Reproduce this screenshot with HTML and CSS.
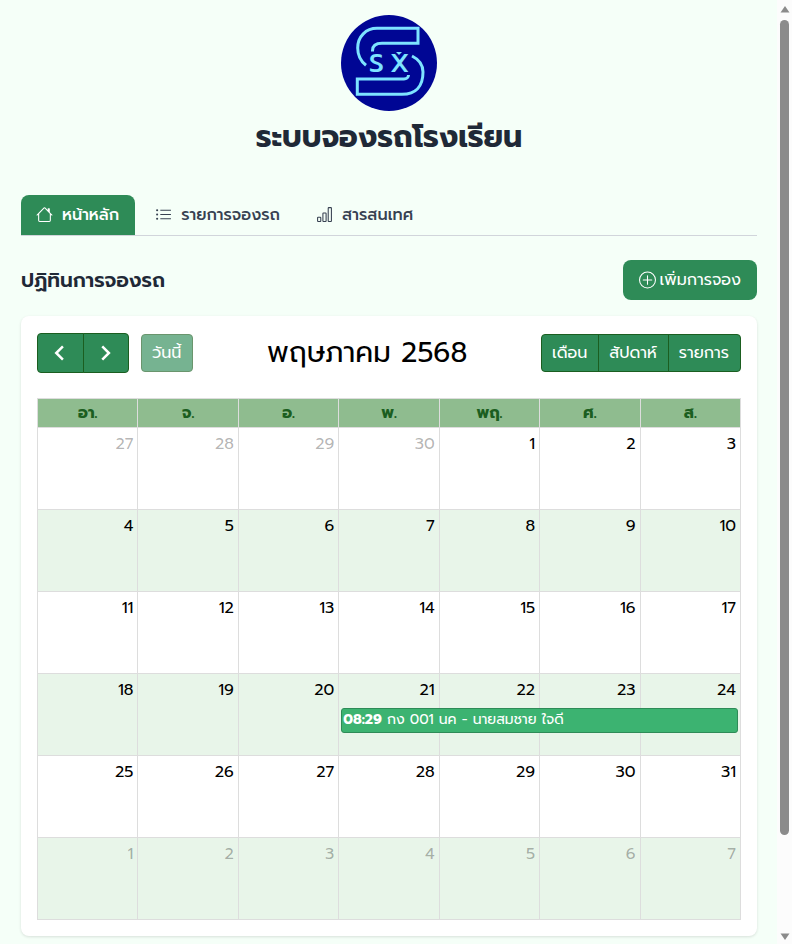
FILE: index.html
```html
<!DOCTYPE html>
<html lang="th">
<head>
<meta charset="utf-8">
<meta name="viewport" content="width=device-width, initial-scale=1">
<title>ระบบจองรถโรงเรียน</title>
<link rel="stylesheet" href="styles.css">
</head>
<body>
<div class="page">
  <header class="masthead">
    <svg class="logo" viewBox="0 0 96 96" role="img" aria-label="SX">
      <circle cx="48" cy="48" r="48" fill="#000694"/>
      <g fill="none" stroke="#7de3ff" stroke-width="3">
        <path d="M25 50.3C19.500 46 16.700 39.500 16.700 33C16.700 21.500 25 13.300 36 13.300H77V28.300H41C35 28.300 31.500 31 31.500 35.700V36.500"/>
        <path d="M71 41C78 44.500 82 50 82 57C82 71 75 79.300 61 79.300H16.300V64H63C65.500 64 67.500 62.500 67.500 60"/>
      </g>
      <path d="M55 37h6l-3 3z" fill="#7de3ff"/>
      <text class="logo-text" x="28" y="57">S</text>
      <text class="logo-text" x="49" y="57">X</text>
    </svg>
    <h1>ระบบจองรถโรงเรียน</h1>
  </header>

  <nav class="tabs">
    <a class="tab active" href="#home">
      <svg class="icon" viewBox="0 0 16 16" fill="currentColor"><path d="M8.707 1.500a1 1 0 0 0-1.414 0L.646 8.146a.5.5 0 0 0 .708.708L2 8.207V13.500A1.500 1.500 0 0 0 3.500 15h9a1.500 1.500 0 0 0 1.500-1.500V8.207l.646.647a.5.5 0 0 0 .708-.708L13 5.793V2.500a.5.5 0 0 0-.5-.5h-1a.5.5 0 0 0-.5.5v1.293zM13 7.207V13.500a.5.5 0 0 1-.5.5h-9a.5.5 0 0 1-.5-.5V7.207l5-5z"/></svg>
      <span>หน้าหลัก</span>
    </a>
    <a class="tab" href="#bookings">
      <svg class="icon" viewBox="0 0 16 16" fill="currentColor"><path d="M5 11.500h10v1H5zM5 7.500h10v1H5zM5 3.500h10v1H5z"/><circle cx="2" cy="4" r="1"/><circle cx="2" cy="8" r="1"/><circle cx="2" cy="12" r="1"/></svg>
      <span>รายการจองรถ</span>
    </a>
    <a class="tab" href="#info">
      <svg class="icon" viewBox="0 0 16 16" fill="none" stroke="currentColor"><rect x="1.500" y="10.500" width="3" height="4" rx=".5"/><rect x="6.500" y="6.500" width="3" height="8" rx=".5"/><rect x="11.500" y="1.500" width="3" height="13" rx=".5"/></svg>
      <span>สารสนเทศ</span>
    </a>
  </nav>

  <main>
    <div class="section-head">
      <h2>ปฏิทินการจองรถ</h2>
      <button class="add" type="button">
        <svg class="icon" viewBox="0 0 16 16" fill="none" stroke="currentColor"><circle cx="8" cy="7.500" r="7.500"/><path d="M8 3.500v8M4 7.500h8" stroke-linecap="round"/></svg>
        <span>เพิ่มการจอง</span>
      </button>
    </div>

    <section class="card">
      <div class="toolbar">
        <div class="tools">
          <div class="group arrows">
            <button type="button" aria-label="ก่อนหน้า"><svg viewBox="0 0 24 24"><path d="M15.500 4l-8 8 8 8"/></svg></button>
            <button type="button" aria-label="ถัดไป"><svg viewBox="0 0 24 24"><path d="M7.500 4l8 8-8 8"/></svg></button>
          </div>
          <button class="today" type="button" disabled>วันนี้</button>
        </div>
        <h2 class="month">พฤษภาคม 2568</h2>
        <div class="group views">
          <button type="button">เดือน</button>
          <button type="button">สัปดาห์</button>
          <button type="button">รายการ</button>
        </div>
      </div>
      <table class="calendar">
        <thead>
          <tr><th>อา.</th><th>จ.</th><th>อ.</th><th>พ.</th><th>พฤ.</th><th>ศ.</th><th>ส.</th></tr>
        </thead>
        <tbody>
          <tr><td class="other">27</td><td class="other">28</td><td class="other">29</td><td class="other">30</td><td>1</td><td>2</td><td>3</td></tr>
          <tr><td>4</td><td>5</td><td>6</td><td>7</td><td>8</td><td>9</td><td>10</td></tr>
          <tr><td>11</td><td>12</td><td>13</td><td>14</td><td>15</td><td>16</td><td>17</td></tr>
          <tr><td>18</td><td>19</td><td>20</td><td class="has-event">21<a class="event" href="#event"><b>08:29</b> กง 001 นค - นายสมชาย ใจดี</a></td><td>22</td><td>23</td><td>24</td></tr>
          <tr><td>25</td><td>26</td><td>27</td><td>28</td><td>29</td><td>30</td><td>31</td></tr>
          <tr><td class="other">1</td><td class="other">2</td><td class="other">3</td><td class="other">4</td><td class="other">5</td><td class="other">6</td><td class="other">7</td></tr>
        </tbody>
      </table>
    </section>
  </main>
</div>
<div class="scrollbar" aria-hidden="true">
  <svg class="cap" viewBox="0 0 10 8"><path d="M5 1L9.500 7.500H.5z"/></svg>
  <div class="track"><div class="thumb"></div></div>
  <svg class="cap" viewBox="0 0 10 8"><path d="M5 7L9.500 .5H.5z"/></svg>
</div>
</body>
</html>
```
FILE: styles.css
```css
* { box-sizing: border-box; }

body {
  margin: 0;
  min-height: 100vh;
  display: flex;
  background: #f5fff8;
  color: #000;
  font: 16px/24px Prompt, Kanit, "Noto Sans Thai", "Noto Sans", sans-serif;
}

button { font: inherit; color: inherit; margin: 0; }
h1, h2 { margin: 0; }

.page { flex: 1; min-width: 0; padding: 15px 20px 8px 21px; }

.masthead { display: flex; flex-direction: column; align-items: center; color: #1f2937; }
.logo { width: 96px; height: 96px; }
.logo-text { font: 500 26px Prompt, "DejaVu Sans", sans-serif; fill: #7de3ff; }
h1 { margin-top: 8px; font-size: 30px; line-height: 36px; font-weight: 700; }

.tabs { display: flex; margin-top: 40px; border-bottom: 1px solid #d1d5db; }
.tab {
  display: flex;
  align-items: center;
  gap: 9px;
  height: 40px;
  margin-right: 5px;
  padding: 0 16px 0 15px;
  border-radius: 8px 8px 0 0;
  color: #374151;
  font-weight: 500;
  text-decoration: none;
  white-space: nowrap;
}
.tab.active { background: #2e8b57; color: #fff; }
.icon { width: 17px; height: 17px; flex: none; }
.tab .icon { margin-bottom: 2px; }

.section-head { display: flex; justify-content: space-between; align-items: center; margin: 24px 0 16px; }
.section-head h2 { color: #1f2937; font-size: 20px; line-height: 28px; font-weight: 600; }
.add {
  display: flex;
  align-items: center;
  gap: 4px;
  height: 40px;
  padding: 0 16px;
  border: 0;
  border-radius: 8px;
  background: #2e8b57;
  color: #fff;
}
.add .icon { overflow: visible; }

.card { padding: 16px; border-radius: 8px; background: #fff; box-shadow: 0 1px 3px rgba(0, 0, 0, .12); }
.toolbar { display: flex; justify-content: space-between; align-items: center; height: 42px; margin-bottom: 24px; }
.tools { display: flex; align-items: center; gap: 12px; }
.group { display: flex; }
.toolbar button {
  height: 38px;
  padding: 0 11px 0 10px;
  border: 1px solid #1b5e20;
  border-radius: 4px;
  background: #2e8b57;
  color: #fff;
}
.group button:not(:first-child) { margin-left: -1px; border-top-left-radius: 0; border-bottom-left-radius: 0; }
.group button:not(:last-child) { border-top-right-radius: 0; border-bottom-right-radius: 0; }
.arrows { width: 92px; }
.toolbar .arrows button { display: grid; place-items: center; flex: 1; height: 40px; padding: 0; }
.arrows svg { width: 20px; height: 20px; fill: none; stroke: #fff; stroke-width: 3; }
.toolbar .today { opacity: .65; }
.month { font-size: 28px; line-height: 42px; font-weight: 400; white-space: nowrap; }

.calendar { width: 100%; table-layout: fixed; border-collapse: collapse; }
.calendar th, .calendar td { border: 1px solid #ddd; }
.calendar th { height: 29px; padding: 0; background: #8fbc8f; color: #1b5e20; font-weight: 700; }
.calendar td { height: 82px; padding: 4px 4px 0; text-align: right; vertical-align: top; }
.calendar tbody tr:nth-child(even) { background: #e8f5e9; }
.calendar .other { color: rgba(0, 0, 0, .3); }
.has-event { position: relative; }
.event {
  position: absolute;
  top: 34px;
  left: 2px;
  width: calc(400% - 1px);
  height: 25px;
  padding: 0 1px;
  border: 1px solid #2e8b57;
  border-radius: 3px;
  background: #3cb371;
  color: #fff;
  font-size: 14px;
  line-height: 22px;
  text-align: left;
  text-decoration: none;
  white-space: nowrap;
}

.scrollbar {
  position: sticky;
  top: 0;
  display: flex;
  flex-direction: column;
  align-items: center;
  width: 15px;
  height: 100vh;
  padding: 5px 0 3px;
  background: #fcfcfc;
}
.cap { width: 10px; height: 8px; fill: #8b8b8b; }
.track { flex: 1; width: 9px; margin: 7px 0; }
.thumb { height: 90%; border-radius: 5px; background: #8b8b8b; }
```
